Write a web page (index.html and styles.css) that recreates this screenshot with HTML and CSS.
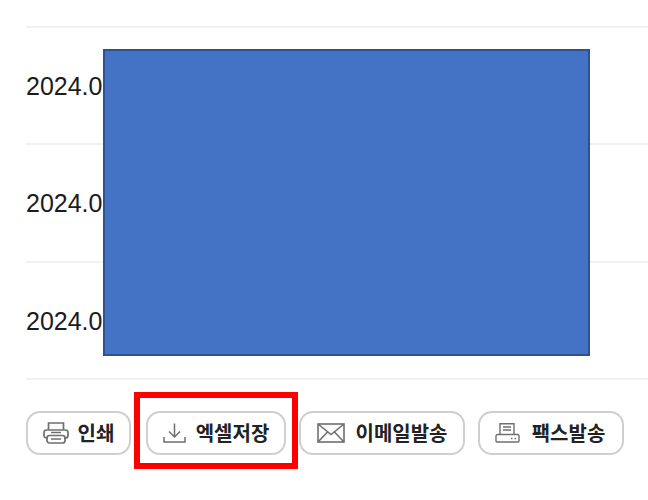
FILE: index.html
```html
<!DOCTYPE html>
<html lang="ko">
<head>
<meta charset="UTF-8" />
<title>목록</title>
<link rel="stylesheet" href="styles.css">
</head>
<body>

<!-- Date rows -->
<div class="rows">
  <div class="row">2024.08</div>
  <div class="row">2024.08</div>
  <div class="row">2024.08</div>
</div>

<!-- Action buttons -->
<div class="actions">
  <button class="btn btn-print">
    <svg width="26" height="22" viewBox="0 0 26 22" fill="none" stroke="#6f6f6f" stroke-width="1.700">
      <path d="M5.500 8V1h15v7"/>
      <path d="M5 16H3.500A2.500 2.500 0 0 1 1 13.500V10.500A2.500 2.500 0 0 1 3.500 8h19A2.500 2.500 0 0 1 25 10.500v3a2.500 2.500 0 0 1-2.500 2.500H21"/>
      <rect x="4" y="13.500" width="18" height="7.500" rx="2.500"/>
      <path d="M8 10.500h10M8 17h10"/>
    </svg>
    인쇄
  </button>
  <button class="btn btn-excel">
    <svg width="23" height="20" viewBox="0 0 23 20" fill="none" stroke="#6f6f6f" stroke-width="1.500">
      <path d="M11.500 0.500v13M6 8.500l5.500 5.500 5.500-5.500"/>
      <path d="M1 14v5h21v-5"/>
    </svg>
    엑셀저장
  </button>
  <button class="btn btn-mail">
    <svg width="28" height="20" viewBox="0 0 28 20" fill="none" stroke="#6f6f6f" stroke-width="1.600">
      <rect x="1" y="1" width="26" height="18"/>
      <path d="M1 1l13 10.500L27 1M1 19l10-10.500M27 19L17 8.500"/>
    </svg>
    이메일발송
  </button>
  <button class="btn btn-fax">
    <svg width="25" height="20" viewBox="0 0 25 20" fill="none" stroke="#6f6f6f" stroke-width="1.400">
      <path d="M5 11V0.700h14V11"/>
      <path d="M8 4h8M8 7h8"/>
      <path d="M2.500 11.500h20a1.500 1.500 0 0 1 1.500 1.500v5a1 1 0 0 1-1 1H2a1 1 0 0 1-1-1v-5a1.500 1.500 0 0 1 1.500-1.500z"/>
      <path d="M16 15.500h1.500M19.500 15.500h1.500"/>
    </svg>
    팩스발송
  </button>
</div>

<!-- Masks and highlight over the screenshot -->
<div class="mask"></div>
<div class="highlight"></div>

</body>
</html>
```

FILE: styles.css
```css
* {
  box-sizing: border-box;
  margin: 0;
  padding: 0;
}
html, body {
  height: 500px;
  overflow: hidden;
}
body {
  position: relative;
  background: #fff;
  color: #1c1c1c;
  font-family: 'Liberation Sans', 'Noto Sans CJK KR', sans-serif;
  padding: 26px 0 0 26px;
}
.rows {
  border-top: 2px solid #f1f1f1;
}
.row {
  height: 117.3px;
  border-bottom: 2px solid #f1f1f1;
  display: flex;
  align-items: center;
  padding-top: 2px;
  font-size: 25px;
}
.actions {
  display: flex;
  margin-top: 31px;
}
.btn {
  height: 44px;
  display: flex;
  align-items: center;
  justify-content: center;
  background: #fff;
  border: 2px solid #cfcfcf;
  border-radius: 14px;
  color: #222;
  font-family: 'Noto Sans CJK KR', sans-serif;
  font-size: 20px;
  font-weight: 700;
}
.btn-print {
  width: 105px;
  gap: 9px;
  margin-right: 15px;
}
.btn-excel {
  width: 140px;
  gap: 10px;
  margin-right: 13px;
}
.btn-mail {
  width: 166px;
  gap: 11px;
  margin-right: 13px;
}
.btn-fax {
  width: 146px;
  gap: 12px;
  padding-right: 2px;
}
.mask {
  position: absolute;
  left: 103px;
  top: 49px;
  width: 487px;
  height: 307px;
  background: #4472c4;
  border: 2px solid #2f528f;
}
.highlight {
  position: absolute;
  left: 134px;
  top: 392px;
  width: 164px;
  height: 77px;
  border: 6px solid #ff0000;
}
```
